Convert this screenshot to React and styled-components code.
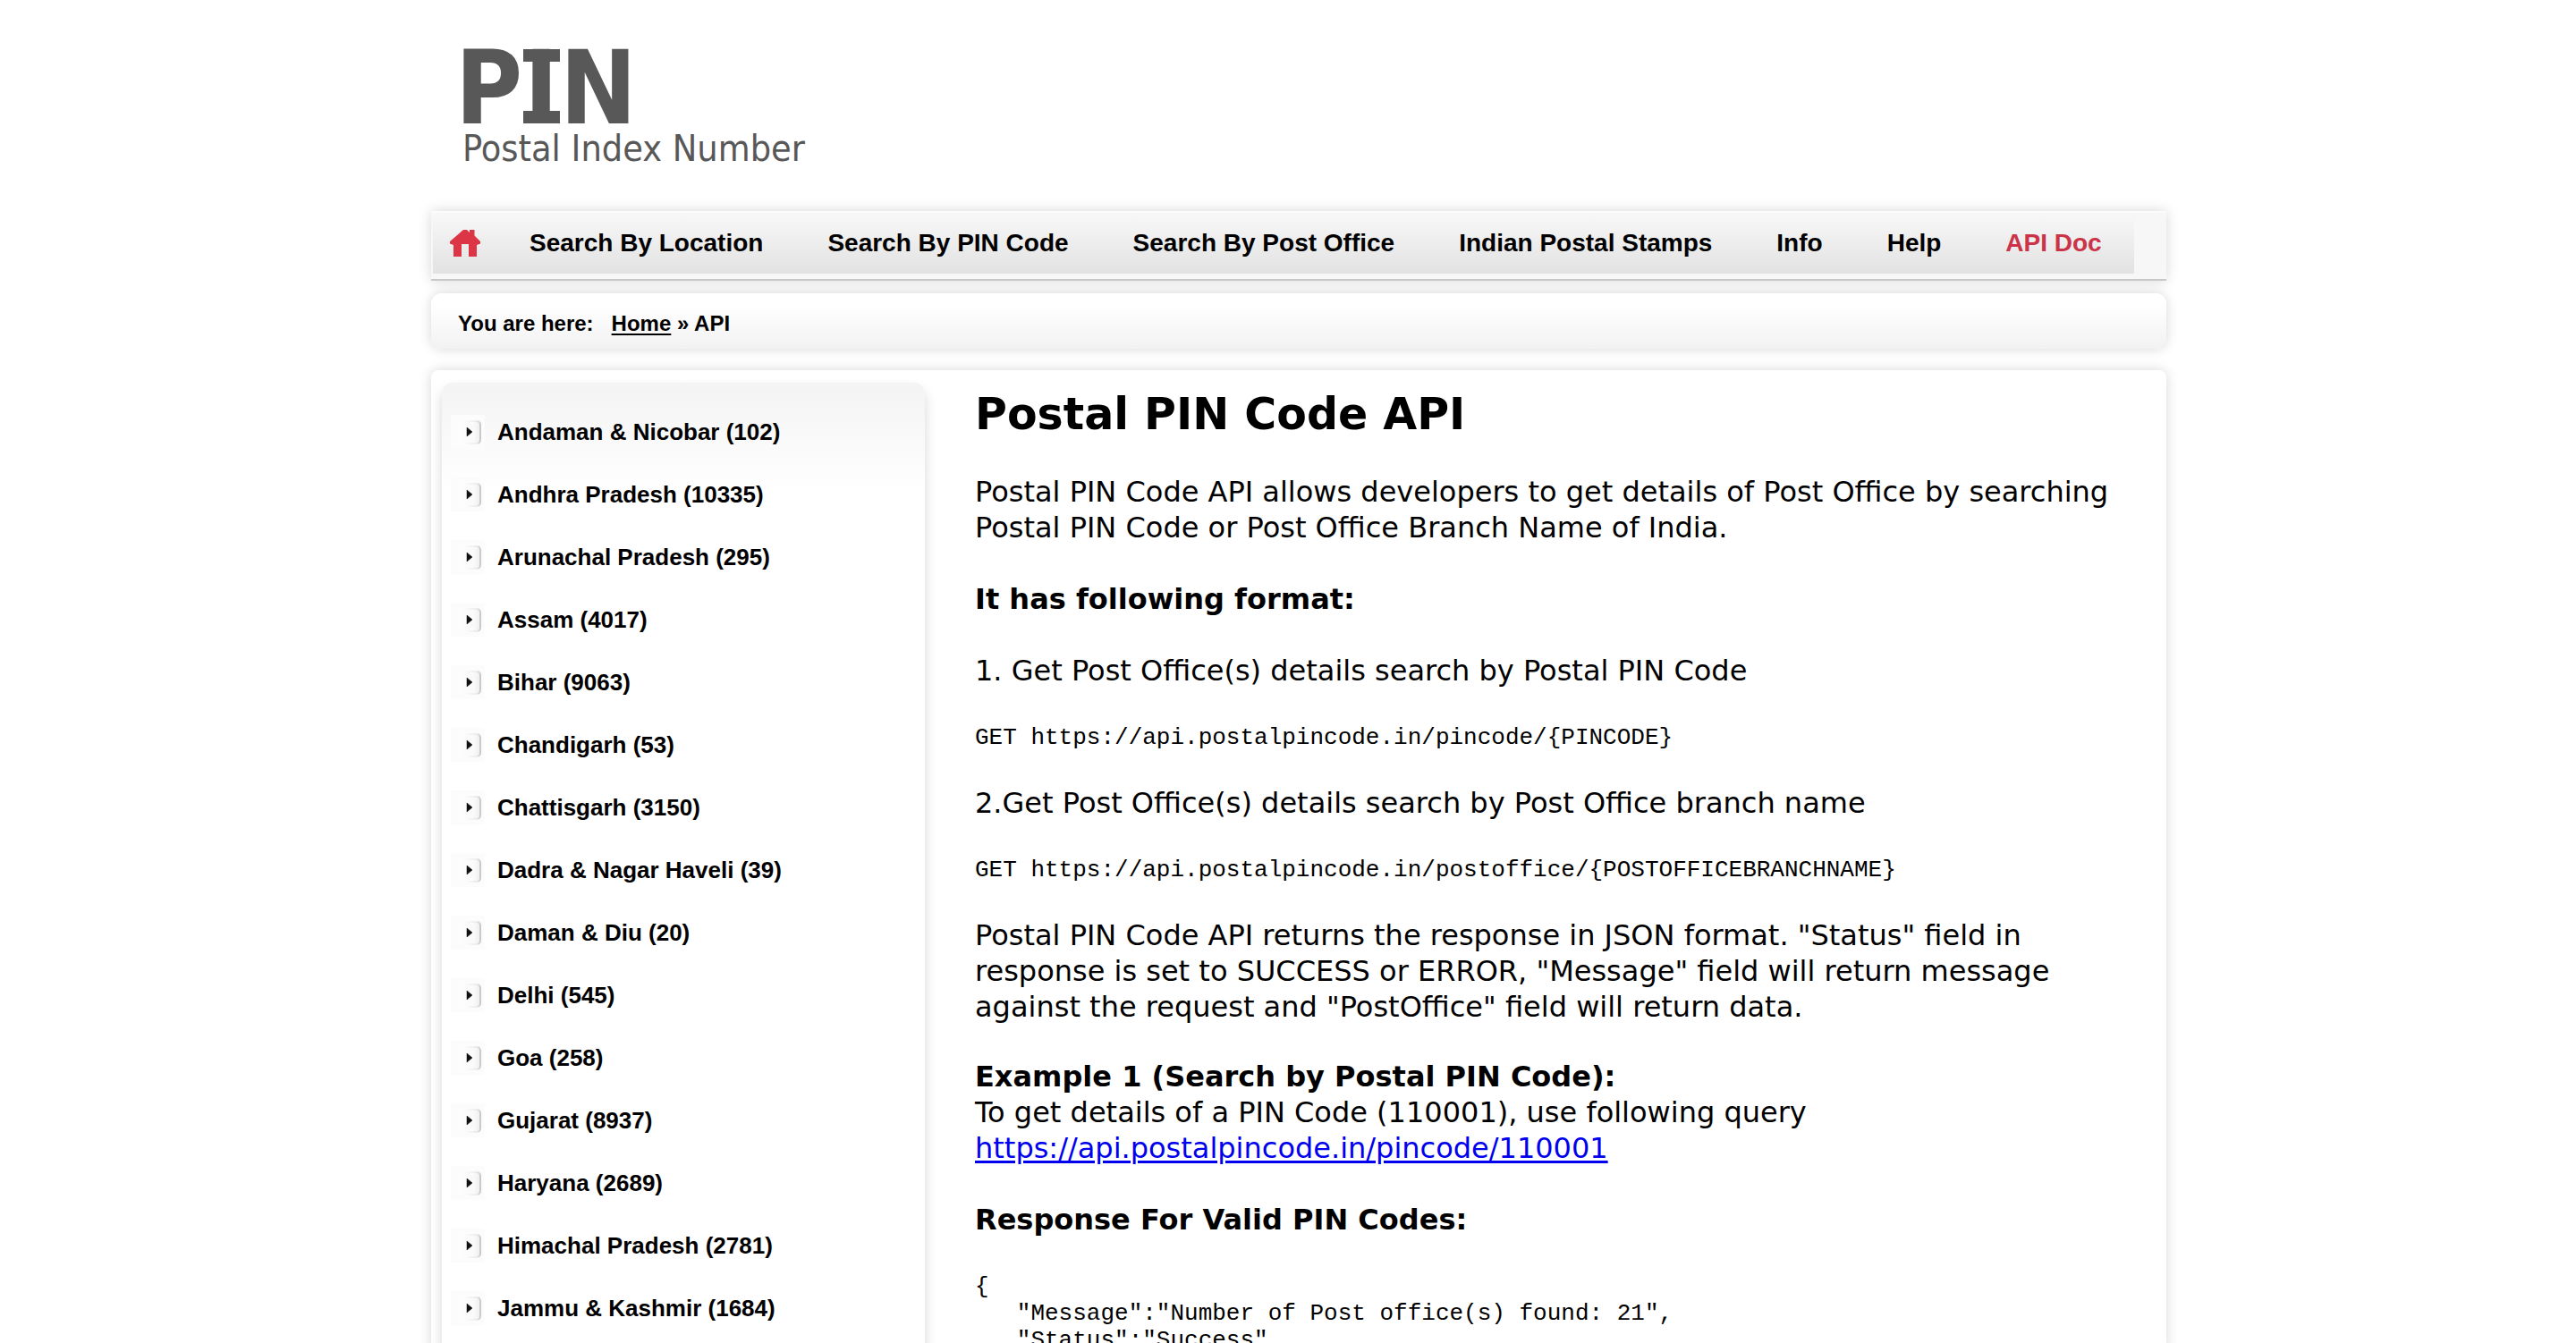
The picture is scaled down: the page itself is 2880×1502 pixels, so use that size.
import React from "react";
import styled, { createGlobalStyle } from "styled-components";

const sans = `Arial, "Liberation Sans", sans-serif`;
const verdana = `Verdana, "DejaVu Sans", sans-serif`;
const mono = `"Liberation Mono", monospace`;
const glow = "0 0 14px rgba(0, 0, 0, 0.16)";

const GlobalStyle = createGlobalStyle`
  *, *::before, *::after { box-sizing: border-box; }
  body { margin: 0; background: #fff; color: #000; font-family: ${sans}; }
`;

const Page = styled.div`
  display: flex;
  flex-direction: column;
  max-width: 1964px;
  min-height: 100vh;
  margin: 0 auto;
  padding-left: 24px;
`;

const Header = styled.header`
  height: 236px;
  padding: 40px 20px 0;
`;

const LogoLink = styled.a`
  display: inline-block;
  color: #585858;
  text-decoration: none;
`;

const Nav = styled.nav`
  display: flex;
  padding: 0 0 6px 2px;
  background: #f7f7f7;
  border-top: 2px solid #fcfcfc;
  border-bottom: 2px solid #c8c8c8;
  box-shadow: ${glow};
`;

const Menu = styled.ul`
  display: flex;
  margin: 0;
  padding: 0;
  list-style: none;
  background: linear-gradient(#f8f8f8, #e2e2e2);
`;

const MenuLink = styled.a`
  display: flex;
  align-items: center;
  justify-content: center;
  height: 68px;
  min-width: 72px;
  padding: 0 ${(p) => (p.$icon ? 18 : 36)}px;
  color: ${(p) => (p.$active ? "#cb3349" : "#000")};
  font-size: 28px;
  font-weight: 700;
  line-height: 32px;
  white-space: nowrap;
  text-decoration: none;
`;

const Breadcrumb = styled.nav`
  margin-top: 14px;
  padding: 16px 30px 10px;
  border-radius: 12px;
  background: linear-gradient(#fff 20%, #f2f2f2);
  box-shadow: ${glow};
  font-size: 24px;
  font-weight: 700;
  line-height: 36px;

  a { color: #000; text-underline-offset: 3px; text-decoration-thickness: 2px; }
`;

const Lead = styled.span`
  margin-right: 20px;
`;

const Main = styled.main`
  display: flex;
  flex: 1;
  gap: 56px;
  margin-top: 24px;
  padding: 14px 20px 0 12px;
  border-radius: 8px 8px 0 0;
  background: #fff;
  box-shadow: ${glow};
`;

const Sidebar = styled.aside`
  flex: 0 0 540px;
  padding: 20px 10px 0;
  border-radius: 12px 12px 0 0;
  background: linear-gradient(#f4f4f4 0, #f5f5f5 20px, #fff 120px);
  box-shadow: 0 8px 14px rgba(0, 0, 0, 0.16);
`;

const StateList = styled.ul`
  margin: 0;
  padding: 0;
  list-style: none;
`;

const StateLink = styled.a`
  display: flex;
  align-items: center;
  gap: 14px;
  height: 70px;
  color: #000;
  font-size: 26px;
  font-weight: 700;
  line-height: 32px;
  text-decoration: none;
`;

const Article = styled.article`
  flex: 1;
  min-width: 0;
  font-family: ${verdana};
  font-size: 32px;
  line-height: 40px;

  a { color: #00e; text-underline-offset: 3px; text-decoration-thickness: 3px; }
`;

const Title = styled.h1`
  margin: 6px 0 36px;
  font-size: 49px;
  line-height: 60px;
`;

const Paragraph = styled.p`
  margin: 0 0 ${(p) => (p.$tight ? 38 : 40)}px;
`;

const Subtitle = styled.h2`
  margin: 0 0 ${(p) => (p.$joined ? 0 : 40)}px;
  font-size: 32px;
  line-height: 40px;
`;

const Code = styled.pre`
  margin: 0 0 ${(p) => (p.$last ? 0 : 38)}px;
  font-family: ${mono};
  font-size: 26px;
  line-height: 30px;
`;

const Logo = () => (
  <svg width="410" height="152" viewBox="-10 0 410 152" fill="currentColor" role="img" aria-label="PIN Postal Index Number">
    <text x="-3 74 114" y="98" fontFamily="DejaVu Sans Condensed, Tahoma, sans-serif" fontSize="114" fontWeight="700">PIN</text>
    <rect x="73" y="15" width="41" height="14" />
    <rect x="73" y="84" width="41" height="14" />
    <text x="5" y="140" fontFamily="DejaVu Sans Condensed, Tahoma, sans-serif" fontSize="41">Postal Index Number</text>
  </svg>
);

const HomeIcon = () => (
  <svg width="34" height="30" viewBox="0 0 34 30" fill="#dc3545" aria-hidden="true">
    <path d="M15 0h4l3 3V0h5.500v6.500L34 13v2.500L30 17v13h-9V16h-8v14H4V17l-4-1.500V13Z" />
  </svg>
);

const Bullet = () => (
  <svg width="38" height="38" viewBox="0 0 38 38" aria-hidden="true">
    <defs>
      <linearGradient id="bulletFace">
        <stop offset="0" stopColor="#fdfdfd" />
        <stop offset="0.7" stopColor="#fafafa" />
        <stop offset="1" stopColor="#eee" />
      </linearGradient>
      <linearGradient id="bulletEdge">
        <stop offset="0.3" stopColor="#ccc" stopOpacity="0" />
        <stop offset="0.85" stopColor="#ccc" stopOpacity="0.3" />
        <stop offset="1" stopColor="#c8c8c8" />
      </linearGradient>
    </defs>
    <rect width="38" height="38" fill="#fcfcfc" />
    <rect x="8" y="7" width="25" height="25" rx="4" fill="url(#bulletFace)" stroke="url(#bulletEdge)" strokeWidth="2" />
    <path d="M18 14 24 19l-6 5Z" fill="#111" stroke="#111" strokeWidth="0.500" />
  </svg>
);

const menu = [
  "Search By Location",
  "Search By PIN Code",
  "Search By Post Office",
  "Indian Postal Stamps",
  "Info",
  "Help",
  "API Doc",
];

const states = [
  ["Andaman & Nicobar", 102],
  ["Andhra Pradesh", 10335],
  ["Arunachal Pradesh", 295],
  ["Assam", 4017],
  ["Bihar", 9063],
  ["Chandigarh", 53],
  ["Chattisgarh", 3150],
  ["Dadra & Nagar Haveli", 39],
  ["Daman & Diu", 20],
  ["Delhi", 545],
  ["Goa", 258],
  ["Gujarat", 8937],
  ["Haryana", 2689],
  ["Himachal Pradesh", 2781],
  ["Jammu & Kashmir", 1684],
];

const response = `{
   "Message":"Number of Post office(s) found: 21",
   "Status":"Success",`;

export default function App() {
  return (
    <>
      <GlobalStyle />
      <Page>
        <Header>
          <LogoLink href="#"><Logo /></LogoLink>
        </Header>
        <Nav aria-label="Main">
          <Menu>
            <li><MenuLink href="#" $icon aria-label="Home"><HomeIcon /></MenuLink></li>
            {menu.map((label) => (
              <li key={label}>
                <MenuLink href="#" $active={label === "API Doc"}>{label}</MenuLink>
              </li>
            ))}
          </Menu>
        </Nav>
        <Breadcrumb aria-label="Breadcrumb">
          <Lead>You are here:</Lead>
          <a href="#">Home</a> » API
        </Breadcrumb>
        <Main>
          <Sidebar>
            <StateList>
              {states.map(([name, count]) => (
                <li key={name}>
                  <StateLink href="#"><Bullet />{`${name} (${count})`}</StateLink>
                </li>
              ))}
            </StateList>
          </Sidebar>
          <Article>
            <Title>Postal PIN Code API</Title>
            <Paragraph>
              Postal PIN Code API allows developers to get details of Post Office by searching
              Postal PIN Code or Post Office Branch Name of India.
            </Paragraph>
            <Subtitle>It has following format:</Subtitle>
            <Paragraph>1. Get Post Office(s) details search by Postal PIN Code</Paragraph>
            <Code>{"GET https://api.postalpincode.in/pincode/{PINCODE}"}</Code>
            <Paragraph>2.Get Post Office(s) details search by Post Office branch name</Paragraph>
            <Code>{"GET https://api.postalpincode.in/postoffice/{POSTOFFICEBRANCHNAME}"}</Code>
            <Paragraph $tight>
              Postal PIN Code API returns the response in JSON format. "Status" field in
              response is set to SUCCESS or ERROR, "Message" field will return message
              against the request and "PostOffice" field will return data.
            </Paragraph>
            <Subtitle $joined>Example 1 (Search by Postal PIN Code):</Subtitle>
            <Paragraph>
              To get details of a PIN Code (110001), use following query
              <br />
              <a href="#">https://api.postalpincode.in/pincode/110001</a>
            </Paragraph>
            <Subtitle>Response For Valid PIN Codes:</Subtitle>
            <Code $last>{response}</Code>
          </Article>
        </Main>
      </Page>
    </>
  );
}
